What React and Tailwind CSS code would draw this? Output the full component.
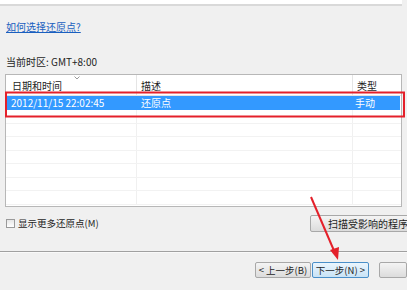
import React from "react";

const rows = Array.from({ length: 7 });

const App = () => {
  return (
    <div
      className="relative w-[407px] h-[290px] overflow-hidden bg-[#f0f0f0] text-[10px] text-[#1e1e1e]"
      style={{ fontFamily: '"Noto Sans CJK SC", "Noto Sans", sans-serif' }}
    >
      {/* top white band */}
      <div className="h-[6px] w-[402px] bg-white border-b-2 border-[#d9d9d9]" />

      <div className="pl-[6px] pt-[15px]">
        <a className="block text-[#1a5fbf] underline leading-[12px] w-fit">如何选择还原点?</a>
        <div className="mt-[23px] leading-[12px]">当前时区: GMT+8:00</div>
      </div>

      {/* list */}
      <div className="ml-[5px] mt-[6px] w-[397px] h-[133px] bg-white border border-[#b7b7b7] overflow-hidden">
        <div className="flex h-[21px] border-b border-[#e5e5e5] relative">
          <div className="w-[131px] pl-[6px] pt-[3px] border-r border-[#e5e5e5]">日期和时间</div>
          <div className="w-[216px] pl-[4px] pt-[3px] border-r border-[#e5e5e5]">描述</div>
          <div className="flex-1 pl-[4px] pt-[3px]">类型</div>
          <svg className="absolute left-[68px] top-[1px]" width="6" height="4" viewBox="0 0 6 4">
            <path d="M0.5 0.5 L3 3 L5.5 0.5" fill="none" stroke="#9a9a9a" strokeWidth="1" />
          </svg>
        </div>
        <div className="flex h-[14px] bg-[#3399ff] text-white leading-[14px] mx-[1px]">
          <div className="w-[130px] pl-[4px]">2012/11/15 22:02:45</div>
          <div className="w-[216px] pl-[4px]">还原点</div>
          <div className="flex-1 pl-[2px]">手动</div>
        </div>
        {rows.map((_, i) => (
          <div key={i} className="flex h-[13.5px] border-b border-[#f2f2f2]">
            <div className="w-[131px] border-r border-[#f0f0f0]" />
            <div className="w-[216px] border-r border-[#f0f0f0]" />
            <div className="flex-1" />
          </div>
        ))}
      </div>

      {/* checkbox + scan button */}
      <div className="flex items-center justify-between pl-[6px] mt-[8px] h-[17px]">
        <label className="flex items-center gap-[3px] text-[9.5px]">
          <span className="w-[9px] h-[9px] border border-[#9a9a9a] bg-gradient-to-b from-[#e6e6e6] to-white" />
          显示更多还原点(M)
        </label>
        <div className="w-[116px] h-[17px] mr-[-19px] border border-[#a8a8a8] rounded-[2px] bg-gradient-to-b from-[#f4f4f4] to-[#dcdcdc] pl-[17px] leading-[15px] whitespace-nowrap text-[10px] overflow-hidden">
          扫描受影响的程序
        </div>
      </div>

      <div className="mt-[19px] h-[2px] border-t border-[#a0a0a0] bg-white/60" />

      {/* bottom buttons */}
      <div className="flex mt-[9px] pl-[255px] gap-[1px] text-[9.5px]">
        <div className="w-[60px] h-[16px] border border-[#a8a8a8] rounded-[2px] bg-gradient-to-b from-[#f4f4f4] to-[#dcdcdc] flex items-center justify-center">
          &lt; 上一步(B)
        </div>
        <div className="w-[61px] h-[16px] border border-[#4a8fc8] rounded-[2px] bg-gradient-to-b from-[#eaf5fd] to-[#c9e3f6] flex items-center justify-center">
          下一步(N) &gt;
        </div>
        <div className="ml-[9px] w-[30px] h-[16px] border border-[#a8a8a8] rounded-[2px] bg-gradient-to-b from-[#f4f4f4] to-[#dcdcdc]" />
      </div>

      {/* annotations */}
      <svg className="absolute left-0 top-0" width="407" height="290">
        <rect x="6" y="92.5" width="398" height="24" fill="none" stroke="#e4202a" strokeWidth="2" />
        <line x1="311" y1="197" x2="335" y2="253" stroke="#e4202a" strokeWidth="2" />
        <polygon points="338,260 330,250 339,247" fill="#e4202a" />
      </svg>
    </div>
  );
};

export default App;
